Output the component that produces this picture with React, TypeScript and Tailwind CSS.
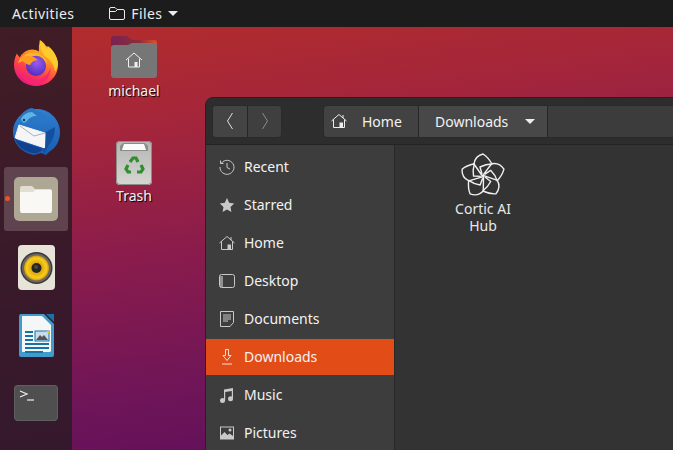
import type { ReactNode } from "react";

function FirefoxIcon() {
  return (
    <svg width="44" height="46" viewBox="0 0 46 48">
      <defs>
        <linearGradient id="ffOuter" x1="0.8" y1="0" x2="0.3" y2="1">
          <stop offset="0" stopColor="#ffd52e" />
          <stop offset="0.35" stopColor="#ff9a1f" />
          <stop offset="0.7" stopColor="#ff3d4f" />
          <stop offset="1" stopColor="#e31587" />
        </linearGradient>
        <radialGradient id="ffBall" cx="0.55" cy="0.35" r="0.7">
          <stop offset="0" stopColor="#9a5cf0" />
          <stop offset="1" stopColor="#4b2bb8" />
        </radialGradient>
      </defs>
      <path d="M27 0c-1 5 1 9 5 12 1-2 2-4 2-6 7 5 12 12 12 20 0 12-10 22-23 22S0 38 0 26c0-4 1-8 3-12 1 2 2 3 3 4 3-5 8-8 13-8 3 0 5 1 7 2 0-5 0-8 1-12z" fill="url(#ffOuter)" />
      <path d="M4 24c3-7 9-11 15-11 8 0 14 5 16 12-3-3-8-5-13-4-5-1-12 0-18 3z" fill="#ffb52a" />
      <path d="M6 32c4 8 13 12 21 9 6-2 10-7 11-12 1 10-6 17-16 17-8 0-14-6-16-14z" fill="#f5276e" opacity="0.9" />
      <path d="M27 0c5 3 7 7 8 10 1-1 1-3 0-4 6 4 10 11 11 18 0 3-1 6-3 9-1-7-5-13-11-16-3-5-6-11-5-17z" fill="#ffca2c" />
      <circle cx="23" cy="27" r="10.500" fill="url(#ffBall)" />
      <path d="M6 19c4-2 8-3 11-2 3 0 6 2 8 4-4 0-7 2-8 5-3 0-8-3-11-7z" fill="#ff9a22" />
    </svg>
  );
}

function ThunderbirdIcon() {
  return (
    <svg width="49" height="49" viewBox="0 0 49 49">
      <defs>
        <linearGradient id="tbBlue" x1="0.5" y1="0" x2="0.5" y2="1">
          <stop offset="0" stopColor="#2f7fd1" />
          <stop offset="1" stopColor="#1a5cae" />
        </linearGradient>
      </defs>
      <path d="M25 2c12 0 23 10 23 23 0 9-4 16-11 20l-3 3-5-2-7 2C10 46 1 37 1 25 1 12 12 2 25 2z" fill="url(#tbBlue)" />
      <path d="M6 16c1-8 8-15 15-15l2 3c6 1 10 4 12 7l-12 2c-5 0-9 3-12 6-2 0-4-1-5-3z" fill="#2a75c4" />
      <path d="M9 12c2-4 6-7 11-7l5 4c-5 0-8 2-10 5l-3 2c-1-1-3-2-3-4z" fill="#5eb4e4" />
      <circle cx="12" cy="13" r="1.200" fill="#0f3a70" />
      <path d="M7 18L33 26L33 41L3 31z" fill="#f5f5f7" stroke="#f5f5f7" strokeLinejoin="round" />
      <path d="M8 19l14 10 11-3" fill="none" stroke="#a9afba" strokeWidth="1" />
      <path d="M2 30l3 3 26 9c-3 3-6 5-10 4C12 45 5 39 2 30z" fill="#10428f" />
      <path d="M34 25l9-5c0 7-2 13-6 18l-5 9-1-5 2-1z" fill="#134f9f" />
    </svg>
  );
}

function FilesDockIcon() {
  return (
    <svg width="44" height="44" viewBox="0 0 44 44">
      <rect width="44" height="44" rx="5" fill="#aea794" />
      <path d="M6 11a2 2 0 0 1 2-2h10l3 3h15a2 2 0 0 1 2 2v3H6z" fill="#e2ded2" />
      <path d="M6 15h13l2-2h15a2 2 0 0 1 2 2v19a2 2 0 0 1-2 2H8a2 2 0 0 1-2-2z" fill="#faf8f5" />
    </svg>
  );
}

function RhythmboxIcon() {
  return (
    <svg width="37" height="45" viewBox="0 0 37 45">
      <defs>
        <radialGradient id="rbCone" cx="0.5" cy="0.5" r="0.5">
          <stop offset="0.3" stopColor="#d79b08" />
          <stop offset="0.8" stopColor="#f8ce1d" />
          <stop offset="1" stopColor="#c9950c" />
        </radialGradient>
      </defs>
      <rect width="37" height="45" rx="4" fill="#e7e3d9" />
      <circle cx="18.500" cy="23" r="16" fill="#3d3a38" />
      <circle cx="18.500" cy="23" r="14.500" fill="#6a6764" />
      <circle cx="18.500" cy="23" r="12.500" fill="url(#rbCone)" />
      <circle cx="18.500" cy="23" r="5" fill="#262522" />
      <circle cx="18" cy="22" r="2" fill="#4c4a46" />
    </svg>
  );
}

function WriterIcon() {
  return (
    <svg width="37" height="45" viewBox="0 0 37 45">
      <path d="M3 1h23l10 10v31a2 2 0 0 1-2 2H3a2 2 0 0 1-2-2V3a2 2 0 0 1 2-2z" fill="#3f9ccd" />
      <path d="M4 3h20l9 9v26a2 2 0 0 1-1 1H5a1 1 0 0 1-1-1z" fill="#f4f6f8" />
      <path d="M28 1h8v8z" fill="#1673a6" />
      <rect x="7" y="18" width="8" height="2" fill="#1673a6" />
      <rect x="7" y="22" width="8" height="2" fill="#1673a6" />
      <rect x="7" y="26" width="8" height="2" fill="#1673a6" />
      <rect x="17" y="18" width="14" height="10" fill="#c9dcea" stroke="#1673a6" />
      <path d="M18 27l4-5 2 2 2-2 4 5z" fill="#555" />
      <path d="M28 18h3v3z" fill="#f0c419" />
      <rect x="7" y="30" width="24" height="2" fill="#1673a6" />
      <rect x="7" y="34" width="24" height="2" fill="#1673a6" />
      <rect x="7" y="38" width="18" height="2" fill="#1673a6" />
    </svg>
  );
}

function TerminalIcon() {
  return (
    <svg width="44" height="36" viewBox="0 0 44 36">
      <rect width="44" height="36" rx="4" fill="#4f4f4f" />
      <rect x="0.500" y="0.500" width="43" height="35" rx="3.500" fill="none" stroke="#5f5f5f" />
      <path d="M6 6l7 3-7 3" fill="none" stroke="#f0f0f0" strokeWidth="1.200" />
      <path d="M13 15h7" stroke="#f0f0f0" strokeWidth="1.200" />
    </svg>
  );
}

function HomeFolderIcon() {
  return (
    <svg width="46" height="42" viewBox="0 0 46 42">
      <defs>
        <linearGradient id="tabGrad" x1="0" y1="0" x2="1" y2="0">
          <stop offset="0" stopColor="#7a2352" />
          <stop offset="0.6" stopColor="#8c2b3c" />
          <stop offset="1" stopColor="#dd5027" />
        </linearGradient>
      </defs>
      <path d="M0 3a3 3 0 0 1 3-3h13l5 4h22a3 3 0 0 1 3 3v8H0z" fill="url(#tabGrad)" />
      <path d="M0 12a3 3 0 0 1 3-3h14l4-2h22a3 3 0 0 1 3 3v29a3 3 0 0 1-3 3H3a3 3 0 0 1-3-3z" fill="#767676" />
      <path d="M15 24l8-7 8 7M17.500 22.500V31h11v-8.500" fill="none" stroke="#f0f0f0" strokeWidth="1" />
      <rect x="23.500" y="26" width="3" height="5" fill="#f0f0f0" />
    </svg>
  );
}

function TrashIcon() {
  return (
    <svg width="36" height="44" viewBox="0 0 36 44">
      <defs>
        <linearGradient id="binGrad" x1="0" y1="0" x2="0" y2="1">
          <stop offset="0" stopColor="#b5b5b3" />
          <stop offset="1" stopColor="#d5d5d2" />
        </linearGradient>
      </defs>
      <rect width="36" height="44" rx="4" fill="url(#binGrad)" />
      <rect x="0.500" y="0.500" width="35" height="43" rx="3.500" fill="none" stroke="#8d8d8a" />
      <path d="M4 10V5l3-3h22l3 3v5z" fill="#8c8c8a" />
      <path d="M6 9l2-6h20l2 6z" fill="#fbfbfb" />
      <g fill="none" stroke="#2f8f2f" strokeWidth="3.200">
        <path d="M14 21l3-4h3l2 4" />
        <path d="M25 24l2 4-2 3h-4" />
        <path d="M15 31h-3l-2-3 2-4" />
      </g>
    </svg>
  );
}

function CorticLogo() {
  const petal = "M0 1L-9 -12Q-8 -20 0 -22Q5 -19 9 -12Q3 -12 -3 -9L-1 -2";
  return (
    <svg width="48" height="48" viewBox="-24 -24 48 48" fill="none" stroke="#f0f0f0" strokeWidth="1.400" strokeLinejoin="round">
      <path d={petal} />
      <path d={petal} transform="rotate(72)" />
      <path d={petal} transform="rotate(144)" />
      <path d={petal} transform="rotate(216)" />
      <path d={petal} transform="rotate(288)" />
    </svg>
  );
}

const sym = { width: 16, height: 16, viewBox: "0 0 16 16", fill: "none", stroke: "#c9c9c9", strokeWidth: 1 };

function HomeSym({ color = "#c9c9c9" }: { color?: string }) {
  return (
    <svg {...sym} stroke={color}>
      <path d="M0.500 8L8 1.500 15.500 8M2.500 6.500V14.500h11V6.500M12 2v3" />
      <rect x="8.500" y="9.500" width="3.500" height="5" fill={color} stroke="none" />
    </svg>
  );
}

const places: { label: string; icon: ReactNode; active?: boolean }[] = [
  {
    label: "Recent",
    icon: (
      <svg {...sym}>
        <path d="M2.500 4A7 7 0 1 1 1 8M1.500 1.500V4.500H4.500M8 4v4.500l3 1.500" />
      </svg>
    ),
  },
  {
    label: "Starred",
    icon: (
      <svg {...sym} stroke="none" fill="#c9c9c9">
        <path d="M8 1l2.200 4.700 5 .7-3.700 3.500.9 5.100L8 12.500 3.600 15l.9-5.100L.8 6.400l5-.7z" />
      </svg>
    ),
  },
  { label: "Home", icon: <HomeSym /> },
  {
    label: "Desktop",
    icon: (
      <svg {...sym}>
        <rect x="0.500" y="1.500" width="15" height="13" rx="2" />
        <path d="M1 3h3v11H1z" fill="#c9c9c9" opacity="0.6" stroke="none" />
      </svg>
    ),
  },
  {
    label: "Documents",
    icon: (
      <svg {...sym}>
        <path d="M1.500 .500h13v11l-3.500 4h-9.500zM4 4h8M4 6h8M4 8h8M4 10h5" />
      </svg>
    ),
  },
  {
    label: "Downloads",
    active: true,
    icon: (
      <svg {...sym} stroke="#f5e0d8">
        <path d="M6.500 .500h3v6h2.500L8 11.500 4 6.500h2.500zM3 15h10" />
      </svg>
    ),
  },
  {
    label: "Music",
    icon: (
      <svg {...sym} stroke="none" fill="#c9c9c9">
        <path d="M5 2.500L14 1v10.500h-1.200V4L6.200 5.100v8.400H5z" />
        <circle cx="3.500" cy="13.500" r="2.500" />
        <circle cx="11.500" cy="11.800" r="2.500" />
      </svg>
    ),
  },
  {
    label: "Pictures",
    icon: (
      <svg {...sym} stroke="none" fill="#c9c9c9">
        <path d="M1 1.500h14v13H1zM2 2.500v8l3.500-3.500 3 3 2-1.500 3.500 2.500v-8.500z" />
        <circle cx="11" cy="5" r="1.500" />
      </svg>
    ),
  },
];

const dockApps = [
  { icon: <FirefoxIcon /> },
  { icon: <ThunderbirdIcon /> },
  { icon: <FilesDockIcon />, active: true },
  { icon: <RhythmboxIcon /> },
  { icon: <WriterIcon /> },
  { icon: <TerminalIcon /> },
];

export default function App() {
  const font = "font-['Noto_Sans','Open_Sans',sans-serif]";
  return (
    <div className={`${font} w-[673px] h-[450px] overflow-hidden flex flex-col text-[14px] text-[#f2f2f2]`}>
      <header className="h-[27px] shrink-0 bg-[#1c1c1c] flex items-center text-[#ececec]">
        <span className="ml-[12px] tracking-[0.4px]">Activities</span>
        <div className="ml-[35px] flex items-center gap-[6px]">
          <svg width="16" height="14" viewBox="0 0 16 14" fill="none" stroke="#ececec">
            <path d="M.5 2a1.500 1.500 0 0 1 1.500-1.500h4l2 2h6a1.500 1.500 0 0 1 1.500 1.500v7a1.500 1.500 0 0 1-1.500 1.500H2A1.500 1.500 0 0 1 .5 11z" />
            <path d="M.5 4.500h6l2-2" />
          </svg>
          <span className="tracking-[0.4px]">Files</span>
          <span className="w-0 h-0 border-x-[5px] border-x-transparent border-t-[5px] border-t-[#ececec]" />
        </div>
      </header>
      <div className="relative flex-1 flex bg-[linear-gradient(172deg,#b32d2b_0%,#a5263a_22%,#8a1c4c_48%,#6f1558_75%,#590d5c_100%)]">
        <nav className="w-[72px] shrink-0 bg-[#2c1a24]/85 flex flex-col items-center gap-[4px] pt-[4px]">
          {dockApps.map((app, i) => (
            <div key={i} className={`relative w-[64px] h-[64px] rounded-[3px] flex items-center justify-center ${app.active ? "bg-[#5f4450]" : ""}`}>
              {app.icon}
              {app.active && <span className="absolute left-[1px] top-[29px] w-[5px] h-[5px] rounded-full bg-[#e95420]" />}
            </div>
          ))}
        </nav>

        <div className="absolute left-[94px] top-[9px] w-[80px] flex flex-col items-center gap-[2px] [text-shadow:1px_1px_1px_#000]">
          <HomeFolderIcon />
          <span>michael</span>
        </div>
        <div className="absolute left-[94px] top-[114px] w-[80px] flex flex-col items-center [text-shadow:1px_1px_1px_#000]">
          <TrashIcon />
          <span>Trash</span>
        </div>

        <div className="absolute left-[205px] top-[70px] w-[480px] h-[360px] rounded-tl-[8px] border border-[#222] bg-[#333] flex flex-col">
          <div className="h-[47px] shrink-0 bg-[#2d2d2d] border-b border-[#242424] rounded-tl-[7px] flex items-center pl-[6px]">
            <div className="h-[33px] w-[70px] flex rounded-[4px] border border-[#2a2a2a] bg-[#3f3f3f] overflow-hidden">
              <div className="w-[35px] bg-[#444] border-r border-[#262626] flex items-center justify-center">
                <svg width="10" height="18" viewBox="0 0 10 18" fill="none" stroke="#e2e2e2"><path d="M7.500 1L2.500 9l5 8" /></svg>
              </div>
              <div className="flex-1 flex items-center justify-center">
                <svg width="10" height="18" viewBox="0 0 10 18" fill="none" stroke="#8c8c8c"><path d="M2.500 1l5 8-5 8" /></svg>
              </div>
            </div>
            <div className="ml-[41px] h-[33px] flex-1 flex rounded-l-[4px] bg-[#3c3c3c] border border-[#2a2a2a]">
              <div className="w-[95px] flex items-center bg-[#424242] border-r border-[#262626] pl-[7px] gap-[15px] rounded-l-[4px]">
                <HomeSym color="#ededed" />
                <span>Home</span>
              </div>
              <div className="w-[129px] flex items-center bg-[#484848] border-r border-[#262626] pl-[16px]">
                <span>Downloads</span>
                <span className="ml-[17px] w-0 h-0 border-x-[5px] border-x-transparent border-t-[5px] border-t-[#eee]" />
              </div>
            </div>
          </div>
          <div className="flex-1 flex">
            <aside className="w-[188px] shrink-0 bg-[#3d3d3d] border-r border-[#282828] box-content pt-[4px] flex flex-col gap-[2px]">
              {places.map((p) => (
                <div key={p.label} className={`h-[36px] flex items-center pl-[13px] gap-[9px] ${p.active ? "bg-[#e24c16]" : ""}`}>
                  <span className="w-[16px] h-[16px] flex">{p.icon}</span>
                  <span className="relative -top-px whitespace-nowrap">{p.label}</span>
                </div>
              ))}
            </aside>
            <main className="flex-1 bg-[#333] pl-[50px] pt-[7px]">
              <div className="w-[76px] flex flex-col items-center text-center leading-[17px]">
                <CorticLogo />
                <span className="text-[#e8e8e8]">Cortic AI Hub</span>
              </div>
            </main>
          </div>
        </div>
      </div>
    </div>
  );
}
